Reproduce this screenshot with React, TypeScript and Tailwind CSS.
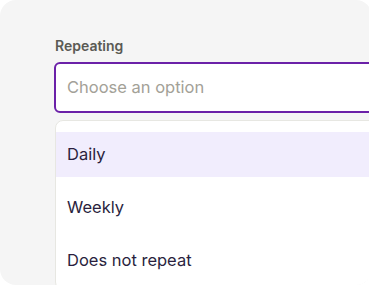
import React from "react";

const options = ["Daily", "Weekly", "Does not repeat"];

export default function App() {
  const active = 0;
  return (
    <div className="w-[369px] h-[286px] bg-white overflow-hidden" style={{ fontFamily: "Inter, 'Noto Sans', sans-serif" }}>
      <div className="w-[372px] h-[285px] bg-[#f5f5f5] rounded-[16px] overflow-hidden pt-[36px] pl-[54px]">
        <label className="block text-[14px] font-semibold text-[#5a5a54] leading-[20px] mb-[6px] pl-[1px]">
          Repeating
        </label>
        <div className="w-[340px] h-[51px] bg-white border-2 border-[#6b21a8] rounded-[6px] flex items-center pl-[11px]">
          <span className="text-[16.5px] text-[#a3a197]">Choose an option</span>
        </div>
        <div className="mt-[7px] ml-[1px] w-[340px] bg-white border border-[#e7e7e2] rounded-[8px] pt-[11px] flex flex-col gap-[8px] h-[170px]">
          {options.map((o, i) => (
            <div
              key={o}
              className={`h-[45px] flex items-center pl-[11px] text-[16.5px] text-[#2a1f3e] ${i === active ? "bg-[#f1edfd]" : ""}`}
            >
              {o}
            </div>
          ))}
        </div>
      </div>
    </div>
  );
}
